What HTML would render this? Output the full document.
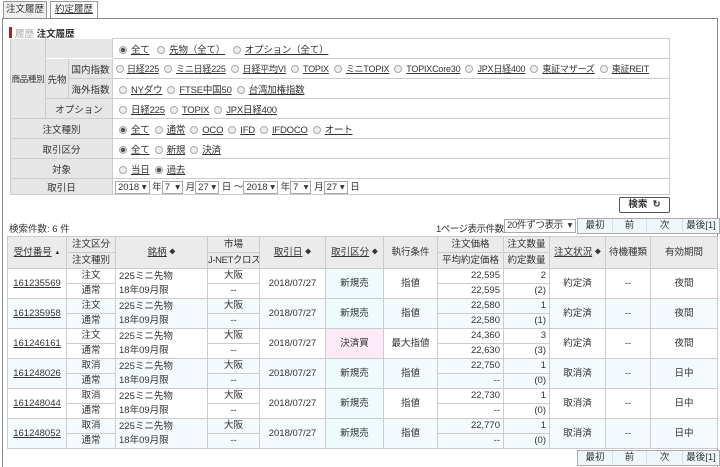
<!DOCTYPE html><html><head><meta charset="utf-8"><style>
*{box-sizing:border-box;margin:0;padding:0}
body{width:720px;height:467px;background:#fff;font-family:"Liberation Sans","Noto Sans CJK JP",sans-serif;font-size:9.5px;color:#333;position:relative;overflow:hidden}
.a{position:absolute}
u{color:#333}
.tab{position:absolute;top:1px;height:18px;border:1px solid #999;border-bottom:none;font-size:9.5px;line-height:16px;text-align:center}
.frame{position:absolute;left:2px;top:18px;width:716px;height:449px;border:1px solid #888;border-bottom:none}
table{border-collapse:collapse;table-layout:fixed}
.f td{border:1px solid #ccc;height:20px;padding:0 3px;white-space:nowrap;overflow:hidden}
.f td.l{background:#e6e6e6;text-align:center;border-color:#fff #ccc #ccc #ccc;padding:0}
.r{display:inline-block;width:8px;height:8px;border-radius:50%;border:1px solid #aaa;background:#eee;vertical-align:-1px;margin:0 4px 0 3px}
.r.on{background:radial-gradient(circle,#555 2px,#eee 2.5px)}
.f u{margin-right:2px;letter-spacing:-0.2px}
.sel{display:inline-block;border:1px solid #aaa;height:13px;line-height:11px;padding:0 2px;background:#fff;vertical-align:middle}
.d td{border:1px solid #ccc;font-size:9.5px;padding:0 3px;height:15px;line-height:12px;white-space:nowrap;text-align:center;overflow:hidden}
.d th{border:1px solid #ccc;background:#ebebeb;font-weight:normal;height:16px;line-height:13px;font-size:9.5px;white-space:nowrap;overflow:hidden}
.d .n{text-align:right}.d .lft{text-align:left;line-height:14px}
.d tr.b td{background:#f4fafd}
.d td.k,.d tr.b td.k{background:#eefafc}
.d td.p{background:#fcebf7}
.s{font-size:6px;vertical-align:1px}
.pg{position:absolute;display:flex;border:1px solid #aaa;background:#eef7f9;height:16px}
.pg span{display:block;text-align:center;line-height:14px;border-right:1px solid #ddd;font-size:9.5px}
</style></head><body>
<div class="tab" style="left:3px;width:44px;background:#eee">注文履歴</div>
<div class="tab" style="left:50px;width:48px;background:#fff"><u>約定履歴</u></div>
<div class="frame"></div>
<div class="a" style="left:9px;top:27px;width:3px;height:11px;background:#a22"></div>
<div class="a" style="left:15px;top:26px"><span style="color:#aaa">履歴</span> <b>注文履歴</b></div>
<table class="f a" style="left:10px;top:38px;width:660px">
<col style="width:35px"><col style="width:23px"><col style="width:44px"><col>
<tr><td class="l" rowspan="4" style="font-size:8.5px;letter-spacing:-0.3px">商品種別</td><td class="l" colspan="2" style="border-bottom-color:#fff"></td><td><i class="r on"></i><u>全て</u> <i class="r"></i><u>先物（全て）</u> <i class="r"></i><u>オプション（全て）</u></td></tr>
<tr><td class="l" rowspan="2">先物</td><td class="l">国内指数</td><td style="font-size:9px;letter-spacing:-0.3px;padding:0 1px"><i class="r" style="margin:0 3px 0 2px"></i><u>日経225</u><i class="r"></i><u>ミニ日経225</u><i class="r"></i><u>日経平均VI</u><i class="r"></i><u>TOPIX</u><i class="r"></i><u>ミニTOPIX</u><i class="r"></i><u>TOPIXCore30</u><i class="r"></i><u>JPX日経400</u><i class="r"></i><u>東証マザーズ</u><i class="r"></i><u>東証REIT</u></td></tr>
<tr><td class="l">海外指数</td><td><i class="r"></i><u>NYダウ</u><i class="r"></i><u>FTSE中国50</u><i class="r"></i><u>台湾加権指数</u></td></tr>
<tr><td class="l" colspan="2">オプション</td><td><i class="r"></i><u>日経225</u><i class="r"></i><u>TOPIX</u><i class="r"></i><u>JPX日経400</u></td></tr>
<tr><td class="l" colspan="3">注文種別</td><td><i class="r on"></i><u>全て</u><i class="r"></i><u>通常</u><i class="r"></i><u>OCO</u><i class="r"></i><u>IFD</u><i class="r"></i><u>IFDOCO</u><i class="r"></i><u>オート</u></td></tr>
<tr><td class="l" colspan="3">取引区分</td><td><i class="r on"></i><u>全て</u><i class="r"></i><u>新規</u><i class="r"></i><u>決済</u></td></tr>
<tr><td class="l" colspan="3">対象</td><td><i class="r"></i><u>当日</u><i class="r on"></i><u>過去</u></td></tr>
<tr><td class="l" colspan="3" style="height:16px">取引日</td><td style="padding:0 2px;height:16px"><span class="sel">2018 ▾</span> 年<span class="sel">7 &nbsp;▾</span> 月<span class="sel">27 ▾</span> 日 ～<span class="sel">2018 ▾</span> 年<span class="sel">7 &nbsp;▾</span> 月<span class="sel">27 ▾</span> 日</td></tr>
</table>
<div class="a" style="left:619px;top:197px;width:51px;height:16px;border:1px solid #555;border-radius:2px;text-align:center;line-height:14px;font-weight:bold">検索 &nbsp;↻</div>
<div class="a" style="left:9px;top:221px">検索件数: 6 件</div>
<div class="a" style="left:436px;top:221px;letter-spacing:-0.5px">1ページ表示件数</div>
<div class="a sel" style="left:504px;top:219px;width:72px;height:14px;letter-spacing:-0.3px">20件ずつ表示 &nbsp;▾</div>
<div class="pg" style="left:577px;top:218px"><span style="width:35px">最初</span><span style="width:34px">前</span><span style="width:36px">次</span><span style="width:36px;border:none">最後[1]</span></div>
<table class="d a" style="left:7px;top:236px;width:711px">
<col style="width:59px"><col style="width:49px"><col style="width:92px"><col style="width:52px"><col style="width:66px"><col style="width:58px"><col style="width:54px"><col style="width:66px"><col style="width:46px"><col style="width:56px"><col style="width:45px"><col>
<tr><th rowspan="2"><u>受付番号</u> <span class="s">▲</span></th><th>注文区分</th><th rowspan="2"><u>銘柄</u> <span class="s">◆</span></th><th>市場</th><th rowspan="2"><u>取引日</u> <span class="s">◆</span></th><th rowspan="2"><u>取引区分</u> <span class="s">◆</span></th><th rowspan="2">執行条件</th><th>注文価格</th><th>注文数量</th><th rowspan="2"><u>注文状況</u> <span class="s">◆</span></th><th rowspan="2">待機種類</th><th rowspan="2">有効期間</th></tr>
<tr><th>注文種別</th><th style="letter-spacing:-0.4px">J-NETクロス</th><th>平均約定価格</th><th>約定数量</th></tr>
<tr><td rowspan="2"><u>161235569</u></td><td>注文</td><td class="lft" rowspan="2">225ミニ先物<br>18年09月限</td><td>大阪</td><td rowspan="2">2018/07/27</td><td rowspan="2" class="k">新規売</td><td rowspan="2">指値</td><td class="n">22,595</td><td class="n">2</td><td rowspan="2">約定済</td><td rowspan="2">--</td><td rowspan="2">夜間</td></tr>
<tr><td>通常</td><td>--</td><td class="n">22,595</td><td class="n">(2)</td></tr>
<tr class="b"><td rowspan="2"><u>161235958</u></td><td>注文</td><td class="lft" rowspan="2">225ミニ先物<br>18年09月限</td><td>大阪</td><td rowspan="2">2018/07/27</td><td rowspan="2" class="k">新規売</td><td rowspan="2">指値</td><td class="n">22,580</td><td class="n">1</td><td rowspan="2">約定済</td><td rowspan="2">--</td><td rowspan="2">夜間</td></tr>
<tr class="b"><td>通常</td><td>--</td><td class="n">22,580</td><td class="n">(1)</td></tr>
<tr><td rowspan="2"><u>161246161</u></td><td>注文</td><td class="lft" rowspan="2">225ミニ先物<br>18年09月限</td><td>大阪</td><td rowspan="2">2018/07/27</td><td rowspan="2" class="p">決済買</td><td rowspan="2">最大指値</td><td class="n">24,360</td><td class="n">3</td><td rowspan="2">約定済</td><td rowspan="2">--</td><td rowspan="2">夜間</td></tr>
<tr><td>通常</td><td>--</td><td class="n">22,630</td><td class="n">(3)</td></tr>
<tr class="b"><td rowspan="2"><u>161248026</u></td><td>取消</td><td class="lft" rowspan="2">225ミニ先物<br>18年09月限</td><td>大阪</td><td rowspan="2">2018/07/27</td><td rowspan="2" class="k">新規売</td><td rowspan="2">指値</td><td class="n">22,750</td><td class="n">1</td><td rowspan="2">取消済</td><td rowspan="2">--</td><td rowspan="2">日中</td></tr>
<tr class="b"><td>通常</td><td>--</td><td class="n">--</td><td class="n">(0)</td></tr>
<tr><td rowspan="2"><u>161248044</u></td><td>取消</td><td class="lft" rowspan="2">225ミニ先物<br>18年09月限</td><td>大阪</td><td rowspan="2">2018/07/27</td><td rowspan="2" class="k">新規売</td><td rowspan="2">指値</td><td class="n">22,730</td><td class="n">1</td><td rowspan="2">取消済</td><td rowspan="2">--</td><td rowspan="2">日中</td></tr>
<tr><td>通常</td><td>--</td><td class="n">--</td><td class="n">(0)</td></tr>
<tr class="b"><td rowspan="2"><u>161248052</u></td><td>取消</td><td class="lft" rowspan="2">225ミニ先物<br>18年09月限</td><td>大阪</td><td rowspan="2">2018/07/27</td><td rowspan="2" class="k">新規売</td><td rowspan="2">指値</td><td class="n">22,770</td><td class="n">1</td><td rowspan="2">取消済</td><td rowspan="2">--</td><td rowspan="2">日中</td></tr>
<tr class="b"><td>通常</td><td>--</td><td class="n">--</td><td class="n">(0)</td></tr>
</table>
<div class="pg" style="left:577px;top:450px"><span style="width:35px">最初</span><span style="width:34px">前</span><span style="width:36px">次</span><span style="width:36px;border:none">最後[1]</span></div>
</body></html>
